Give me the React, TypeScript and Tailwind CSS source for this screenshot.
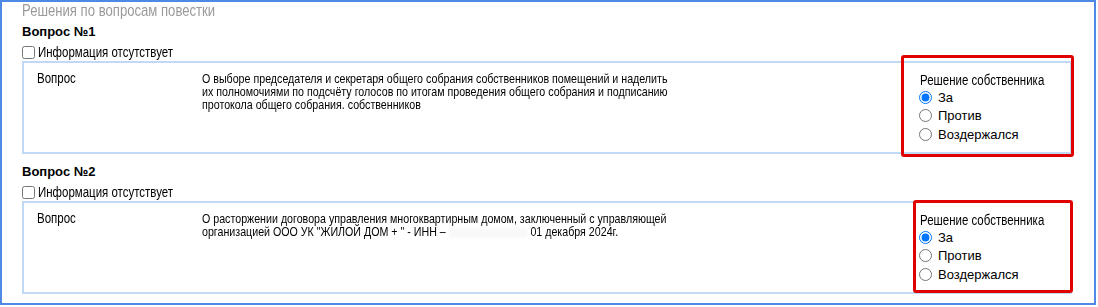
import React from 'react';

type Question = {
  num: number;
  lines: React.ReactNode[];
};

const questions: Question[] = [
  {
    num: 1,
    lines: [
      'О выборе председателя и секретаря общего собрания собственников помещений и наделить',
      'их полномочиями по подсчёту голосов по итогам проведения общего собрания и подписанию',
      'протокола общего собрания. собственников',
    ],
  },
  {
    num: 2,
    lines: [
      'О расторжении договора управления многоквартирным домом, заключенный с управляющей',
      <>
        организацией ООО УК "ЖИЛОЙ ДОМ + " - ИНН –{' '}
        <span className="inline-block h-[8px] w-[96px] translate-y-[1px] bg-[#f7f7f7] blur-[2px]" />{' '}
        01 декабря 2024г.
      </>,
    ],
  },
];

// no condensed face installed, so squeeze Arial-metric text horizontally
function Narrow({ children }: { children: React.ReactNode }) {
  return <span className="inline-block origin-left scale-x-[0.82] whitespace-nowrap">{children}</span>;
}

function Decision({ name }: { name: string }) {
  const options = ['За', 'Против', 'Воздержался'];
  return (
    <div className="w-[150px] shrink-0">
      <div className="text-[14px] leading-[16px] text-black">
        <Narrow>Решение собственника</Narrow>
      </div>
      {options.map((o, i) => (
        <label key={o} className="flex h-[18.5px] items-center gap-[6px] text-[13px] text-black">
          <input
            type="radio"
            name={name}
            defaultChecked={i === 0}
            className="m-0 -ml-[1px] h-[13px] w-[13px] accent-[#0075ff]"
          />
          {o}
        </label>
      ))}
    </div>
  );
}

function QuestionBlock({ q, first }: { q: Question; first: boolean }) {
  return (
    <div className={first ? 'mt-[5px]' : 'mt-[10px]'}>
      <div className="text-[13px] font-bold leading-[16px] text-black">Вопрос №{q.num}</div>
      <label className="mt-[4px] flex h-[16px] items-center gap-[3px] text-[14px] text-black">
        <input type="checkbox" className="m-0 h-[13px] w-[13px]" />
        <Narrow>Информация отсутствует</Narrow>
      </label>
      <div className="mt-[1px] flex h-[93px] border-2 border-[#c0daf4] pl-[13px] pt-[9px] text-black">
        <div className="w-[165px] shrink-0 text-[14px] leading-[13px]">
          <Narrow>Вопрос</Narrow>
        </div>
        <div className="flex-1 text-[13px] leading-[13px]">
          {q.lines.map((l, i) => (
            <div key={i}>
              <Narrow>{l}</Narrow>
            </div>
          ))}
        </div>
        <Decision name={`q${q.num}`} />
      </div>
    </div>
  );
}

export default function App() {
  return (
    <div className="relative h-[307px] w-[1098px] overflow-hidden bg-white font-['Liberation_Sans',Arial,sans-serif]">
      <div className="h-[305px] w-[1096px] border-2 border-[#4f89e6] pl-[20px] pr-[22px]">
        <div className="pt-[1px] text-[16px] leading-[16px] text-[#9a9a9a]">
          <Narrow>Решения по вопросам повестки</Narrow>
        </div>
        {questions.map((q, i) => (
          <QuestionBlock key={q.num} q={q} first={i === 0} />
        ))}
      </div>

      {/* annotation frames */}
      <div className="absolute left-[901px] top-[55px] h-[102px] w-[173px] rounded-[3px] border-[3px] border-[#e00000]" />
      <div className="absolute left-[913px] top-[200px] h-[93px] w-[160px] rounded-[3px] border-[3px] border-[#e00000]" />
    </div>
  );
}
